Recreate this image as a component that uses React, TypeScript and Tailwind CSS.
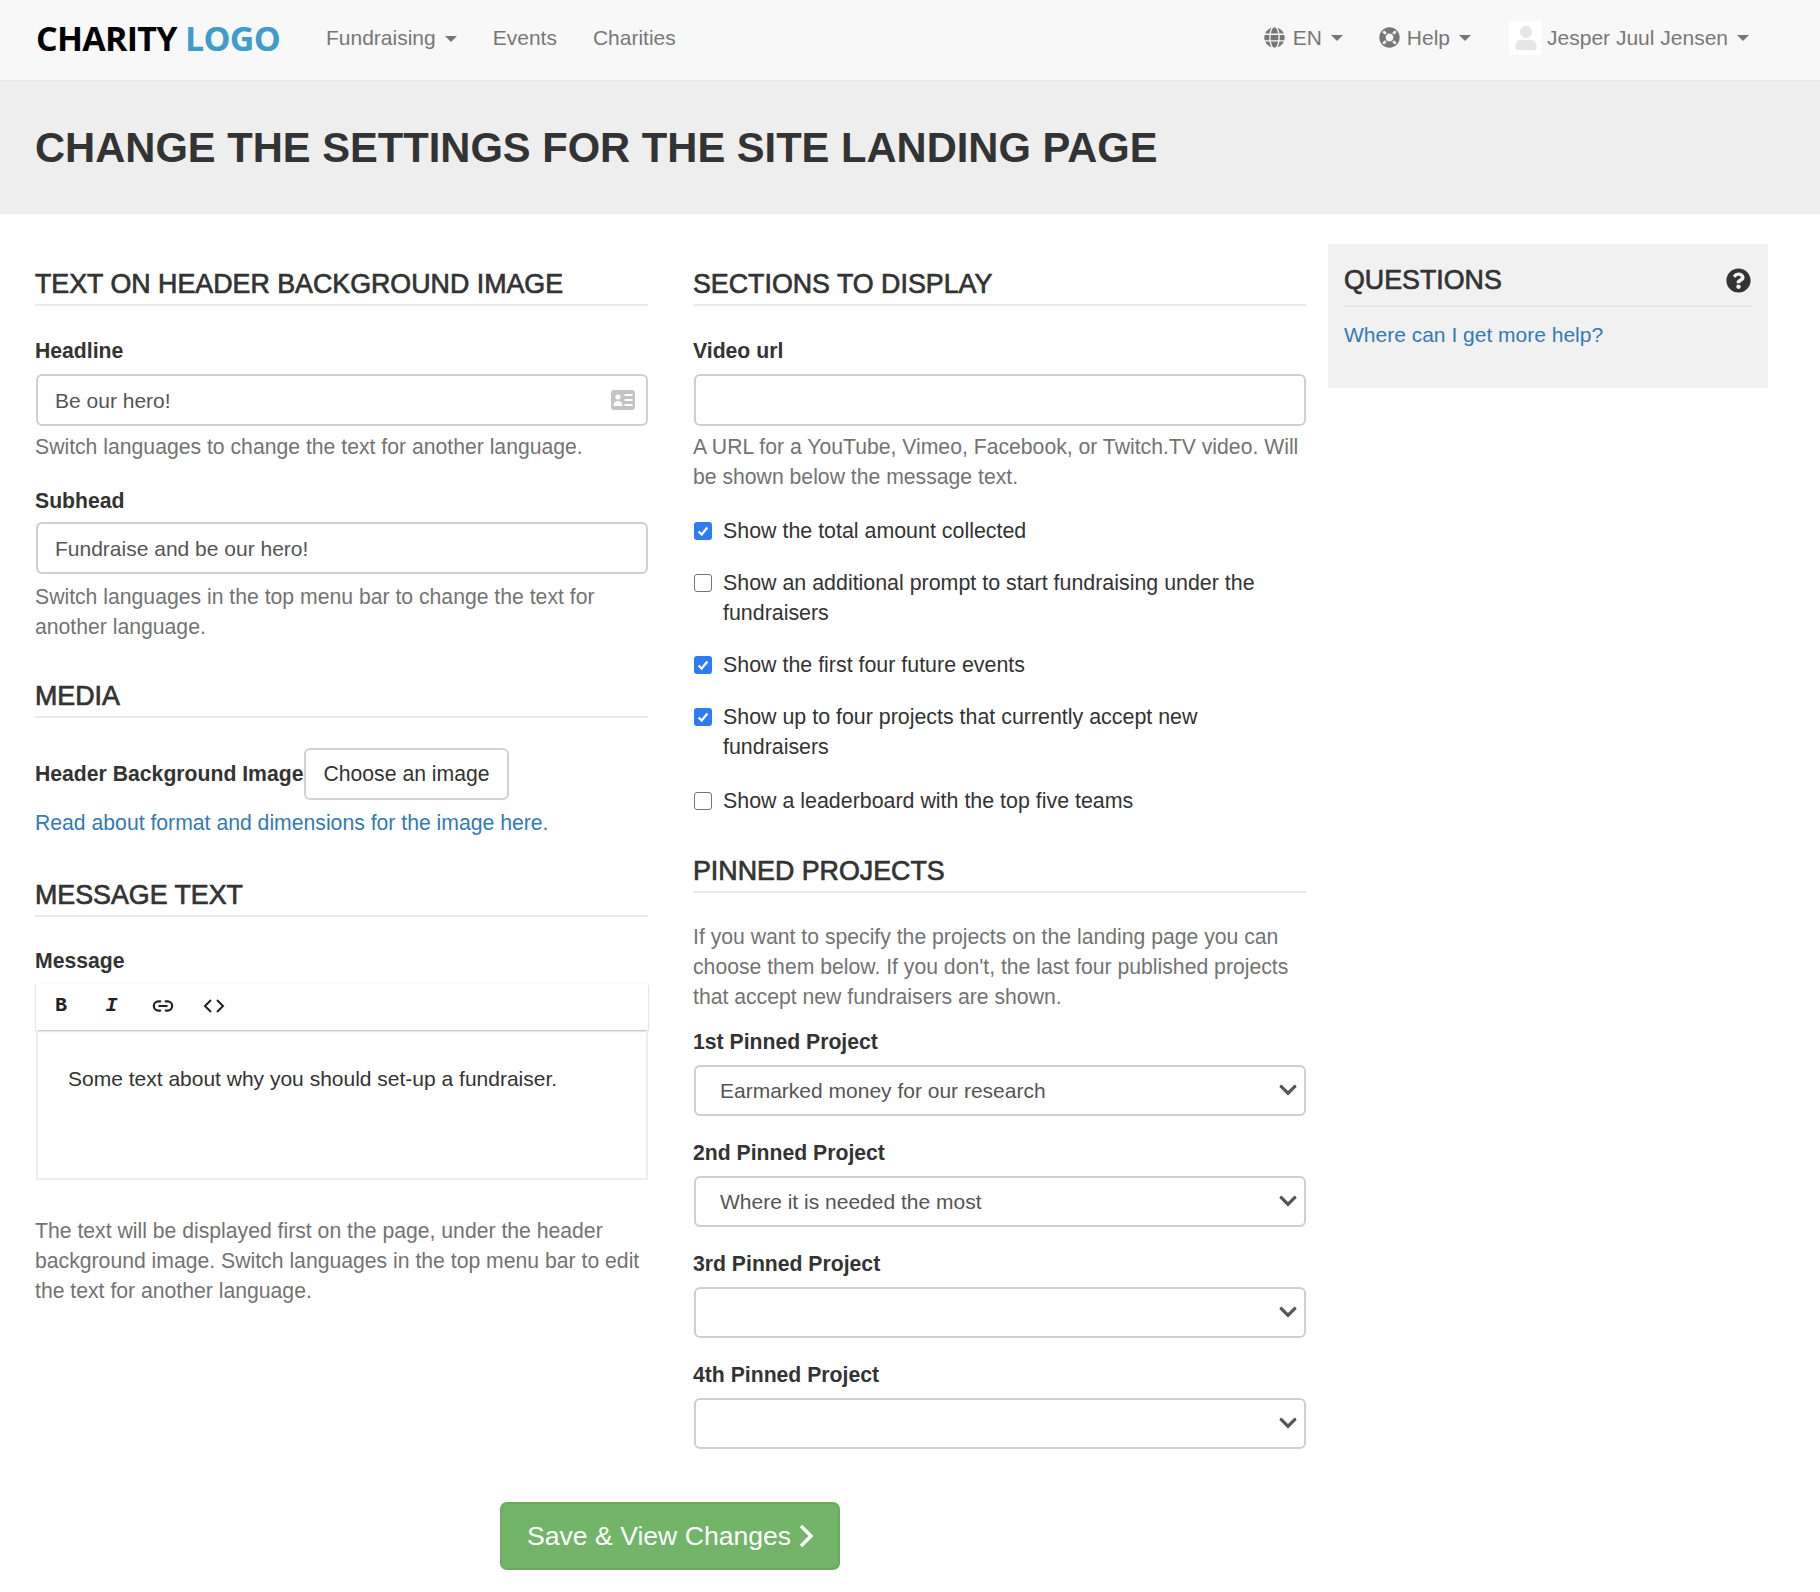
import { Link2 } from "lucide-react";
import type { ReactNode } from "react";
import { FaChevronDown, FaGlobe, FaLifeRing, FaQuestionCircle, FaUser } from "react-icons/fa";

const Caret = () => (
	<span className="inline-block ml-[9px] w-0 h-0 border-x-[6px] border-x-transparent border-t-[6px] border-t-[#777] align-middle" />
);

const SectionHeading = ({ children, className = "" }: { children: ReactNode; className?: string }) => (
	<h2 className={`h-[40px] pb-[2px] border-b-2 border-[#e9e9e9] text-[26.8px] leading-[36px] text-[#333] [-webkit-text-stroke:0.7px_#333] ${className}`}>
		{children}
	</h2>
);

const Label = ({ children, className = "" }: { children: ReactNode; className?: string }) => (
	<label className={`block font-bold text-[#333] ${className}`}>{children}</label>
);

const Help = ({ children, className = "" }: { children: ReactNode; className?: string }) => (
	<p className={`text-[#737373] ${className}`}>{children}</p>
);

const TextInput = ({ value }: { value: string }) => (
	<input
		readOnly
		value={value}
		className="block w-[612px] h-[52px] ml-px px-[17px] pt-[2px] bg-white border-2 border-[#cfcfcf] rounded-[6px] text-[21px] text-[#555] outline-none"
	/>
);

const CardIcon = () => (
	<svg viewBox="0 0 24 20" className="absolute right-[13px] top-[16px] w-[24px] h-[20px]">
		<rect width="24" height="20" rx="3" fill="#c4c4c4" />
		<circle cx="7" cy="7" r="2.6" fill="white" />
		<path d="M2.5 16c0-3.5 2-5 4.5-5s4.5 1.500 4.500 5z" fill="white" />
		<path d="M13.500 5h8M13.500 10h8M13.500 15h8" stroke="white" strokeWidth="1.800" />
	</svg>
);

const Check = ({ checked, children, className = "" }: { checked?: boolean; children: ReactNode; className?: string }) => (
	<div className={`flex ${className}`}>
		{checked ? (
			<span className="mt-[6px] ml-px flex items-center justify-center shrink-0 w-[18px] h-[18px] rounded-[3px] bg-[#2f7bf6]">
				<svg viewBox="0 0 16 16" className="w-[14px] h-[14px]" fill="none" stroke="white" strokeWidth="2.6">
					<path d="M3 8.5 6.5 12 13 4" />
				</svg>
			</span>
		) : (
			<span className="mt-[6px] ml-px shrink-0 w-[18px] h-[18px] rounded-[3px] bg-white border border-[#767676]" />
		)}
		<span className="ml-[11px] text-[21.4px] text-[#333]">{children}</span>
	</div>
);

const PinnedSelect = ({ label, value }: { label: string; value?: string }) => (
	<div>
		<Label className="mb-[8px]">{label}</Label>
		<div className="relative ml-px">
			<select
				defaultValue={value ?? ""}
				className="block w-full h-[51px] pl-[24px] pr-[40px] appearance-none bg-white border-2 border-[#cfcfcf] rounded-[6px] text-[21px] text-[#555] outline-none"
			>
				<option value={value ?? ""}>{value ?? ""}</option>
			</select>
			<FaChevronDown className="absolute right-[8px] top-[15px] text-[20px] text-[#555] pointer-events-none" />
		</div>
	</div>
);

const Navbar = () => (
	<nav className="h-[82px] flex items-center pl-[36px] pr-[71px] pb-[5px] bg-[#f8f8f8] border-b-2 border-[#eaeaea] text-[21px] text-[#777]">
		<div className="w-[290px] font-['Open_Sans',sans-serif] font-bold text-[34px] leading-none tracking-[-0.7px] text-black">
			CHARITY <span className="text-[#3f9ccb]">LOGO</span>
		</div>
		<a className="mr-[36px]">
			Fundraising
			<Caret />
		</a>
		<a className="mr-[36px]">Events</a>
		<a>Charities</a>
		<div className="ml-auto flex items-center">
			<a className="flex items-center mr-[36px]">
				<FaGlobe className="text-[21px] mr-[8px]" />
				EN
				<Caret />
			</a>
			<a className="flex items-center mr-[38px]">
				<FaLifeRing className="text-[21px] mr-[7px]" />
				Help
				<Caret />
			</a>
			<a className="flex items-center">
				<span className="w-[33px] h-[34px] mr-[5px] flex items-end justify-center bg-white text-[#e6e6e6]">
					<FaUser className="text-[24px] mb-[5px]" />
				</span>
				Jesper Juul Jensen
				<Caret />
			</a>
		</div>
	</nav>
);

const LeftColumn = () => (
	<div className="w-[613px] mr-[45px]">
		<SectionHeading>TEXT ON HEADER BACKGROUND IMAGE</SectionHeading>
		<Label className="mt-[30px] mb-[8px]">Headline</Label>
		<div className="relative">
			<TextInput value="Be our hero!" />
			<CardIcon />
		</div>
		<Help className="mt-[6px]">Switch languages to change the text for another language.</Help>
		<Label className="mt-[24px] mb-[6px]">Subhead</Label>
		<TextInput value="Fundraise and be our hero!" />
		<Help className="mt-[8px]">
			Switch languages in the top menu bar to change the text for another language.
		</Help>

		<SectionHeading className="mt-[36px]">MEDIA</SectionHeading>
		<div className="mt-[30px] flex items-center">
			<Label>Header Background Image</Label>
			<button className="h-[52px] ml-px px-[17px] bg-white border-2 border-[#d2d2d2] rounded-[6px] text-[#333]">
				Choose an image
			</button>
		</div>
		<a className="block mt-[8px] text-[#337ab7]">Read about format and dimensions for the image here.</a>

		<SectionHeading className="mt-[39px]">MESSAGE TEXT</SectionHeading>
		<Label className="mt-[29px] mb-[8px]">Message</Label>
		<div className="ml-px h-[46px] pb-[2px] flex items-center bg-white shadow-[0_1px_2px_rgba(0,0,0,0.3)] text-[#222]">
			<span className="w-[50px] text-center font-['Liberation_Mono',monospace] font-bold text-[20px]">B</span>
			<span className="w-[51px] text-center font-['Liberation_Mono',monospace] font-bold italic text-[20px]">I</span>
			<span className="w-[51px] flex justify-center">
				<Link2 className="w-[22px] h-[22px]" strokeWidth={2.4} />
			</span>
			<span className="w-[51px] flex justify-center">
				<svg viewBox="0 0 22 16" className="w-[22px] h-[16px]" fill="none" stroke="currentColor" strokeWidth="2">
					<path d="M8 2 2 8l6 6M14 2l6 6-6 6" />
				</svg>
			</span>
		</div>
		<div className="ml-px h-[150px] px-[30px] pt-[34px] border-2 border-t-0 border-[#eeeeee] text-[21px] text-[#333]">
			Some text about why you should set-up a fundraiser.
		</div>
		<Help className="mt-[36px]">
			The text will be displayed first on the page, under the header background image. Switch
			languages in the top menu bar to edit the text for another language.
		</Help>
	</div>
);

const MiddleColumn = () => (
	<div className="w-[613px]">
		<SectionHeading>SECTIONS TO DISPLAY</SectionHeading>
		<Label className="mt-[30px] mb-[8px]">Video url</Label>
		<TextInput value="" />
		<Help className="mt-[6px]">
			A URL for a YouTube, Vimeo, Facebook, or Twitch.TV video. Will be shown below the message text.
		</Help>
		<Check checked className="mt-[24px]">Show the total amount collected</Check>
		<Check className="mt-[22px]">Show an additional prompt to start fundraising under the fundraisers</Check>
		<Check checked className="mt-[22px]">Show the first four future events</Check>
		<Check checked className="mt-[22px]">Show up to four projects that currently accept new fundraisers</Check>
		<Check className="mt-[24px]">Show a leaderboard with the top five teams</Check>

		<SectionHeading className="mt-[37px]">PINNED PROJECTS</SectionHeading>
		<Help className="mt-[29px]">
			If you want to specify the projects on the landing page you can choose them below. If you
			don't, the last four published projects that accept new fundraisers are shown.
		</Help>
		<div className="mt-[15px] flex flex-col gap-[22px]">
			<PinnedSelect label="1st Pinned Project" value="Earmarked money for our research" />
			<PinnedSelect label="2nd Pinned Project" value="Where it is needed the most" />
			<PinnedSelect label="3rd Pinned Project" />
			<PinnedSelect label="4th Pinned Project" />
		</div>
	</div>
);

const Sidebar = () => (
	<aside className="self-start w-[440px] h-[144px] ml-[22px] -mt-[22px] px-[16px] pt-[19px] bg-[#f1f1f1]">
		<h2 className="h-[44px] pb-[8px] flex items-center justify-between border-b-2 border-[#e6e6e6] text-[26.8px] leading-[34px] text-[#333] [-webkit-text-stroke:0.7px_#333]">
			QUESTIONS
			<FaQuestionCircle className="mr-[1px] text-[25px] [-webkit-text-stroke:0]" />
		</h2>
		<a className="block mt-[13px] text-[21px] text-[#337ab7]">Where can I get more help?</a>
	</aside>
);

export default function App() {
	return (
		<div className="min-h-[1592px] bg-white font-['Liberation_Sans',Arial,sans-serif] text-[21.2px] leading-[30px]">
			<Navbar />
			<header className="h-[132px] flex items-center pl-[35px] bg-[#eeeeee]">
				<h1 className="font-bold text-[41.7px] leading-none text-[#333]">
					CHANGE THE SETTINGS FOR THE SITE LANDING PAGE
				</h1>
			</header>
			<main className="pl-[35px] pt-[52px]">
				<div className="flex">
					<LeftColumn />
					<MiddleColumn />
					<Sidebar />
				</div>
				<button className="flex items-center h-[68px] ml-[465px] mt-[53px] px-[25px] bg-[#72b568] border-2 border-[#6aab60] rounded-[7px] text-[26.6px] text-white">
					Save &amp; View Changes
					<svg viewBox="0 0 14 24" className="ml-[8px] w-[14px] h-[24px]" fill="none" stroke="white" strokeWidth="3.5">
						<path d="M2 2l10 10L2 22" />
					</svg>
				</button>
			</main>
		</div>
	);
}
